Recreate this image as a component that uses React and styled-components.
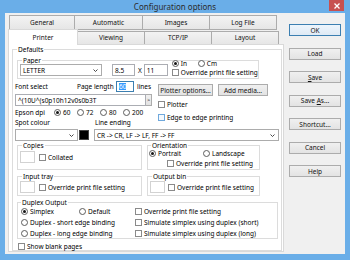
import React from 'react';
import styled, { createGlobalStyle } from 'styled-components';

const GlobalStyle = createGlobalStyle`
  html, body {
    margin: 0;
    padding: 0;
  }
  body {
    font-family: "Noto Sans", "Open Sans", sans-serif;
    font-size: 6.5px;
    color: #000;
  }
  * {
    box-sizing: border-box;
  }
`;

const Window = styled.div`
  width: 350px;
  height: 260px;
  background: #6aaee8;
  display: flex;
  flex-direction: column;
  overflow: hidden;
`;

const TitleBar = styled.div`
  height: 15px;
  display: grid;
  grid-template-columns: 1fr auto 1fr;
  align-items: center;
`;

const Title = styled.div`
  grid-column: 2;
  font-size: 8px;
  line-height: 10px;
  color: #2c2c2c;
`;

const CloseButton = styled.div`
  grid-column: 3;
  justify-self: end;
  align-self: start;
  width: 15px;
  height: 11px;
  margin-right: 6px;
  background: #c75050;
  display: flex;
  align-items: center;
  justify-content: center;
`;

const Client = styled.div`
  flex: 1;
  margin: 0 5px 6px 5px;
  background: #f0f0f0;
  display: flex;
  gap: 5px;
  padding: 2px 4px 2px 3px;
`;

const TabArea = styled.div`
  width: 276px;
  display: flex;
  flex-direction: column;
`;

const TabRow = styled.div`
  display: flex;
  align-items: flex-end;
  height: ${p => (p.$front ? 16 : 15)}px;
  padding-left: ${p => (p.$front ? 0 : 1)}px;
  margin-top: ${p => (p.$front ? -1 : 0)}px;
  margin-bottom: ${p => (p.$front ? -1 : 0)}px;
`;

const Tab = styled.div`
  width: ${p => p.$w}px;
  height: ${p => (p.$active ? 16 : p.$back ? 15 : 13)}px;
  margin-bottom: ${p => (p.$active || p.$back ? 0 : 1)}px;
  margin-left: -1px;
  &:first-child {
    margin-left: 0;
  }
  border: 1px solid ${p => (p.$active ? '#d9d9d9' : '#acacac')};
  border-bottom: ${p => (p.$back ? '1px solid #acacac' : 'none')};
  background: ${p => (p.$active ? '#fff' : 'linear-gradient(#f3f3f3, #e6e6e6)')};
  position: ${p => (p.$active ? 'relative' : 'static')};
  z-index: ${p => (p.$active ? 1 : 'auto')};
  display: flex;
  align-items: center;
  justify-content: center;
  padding-top: ${p => (p.$active ? 1 : 0)}px;
  line-height: 8px;
  color: #111;
`;

const Panel = styled.div`
  flex: 1;
  background: #fff;
  border: 1px solid #d9d9d9;
  padding: 1px 1px 0 3px;
  display: flex;
  flex-direction: column;
`;

const Group = styled.fieldset`
  margin: ${p => p.$m || '0'};
  padding: ${p => p.$pad || '0 2px 2px 2px'};
  border: 1px solid #dcdcdc;
  min-width: 0;
  width: ${p => (p.$w ? `${p.$w}px` : 'auto')};
  flex: ${p => (p.$grow ? 1 : 'none')};
  display: flex;
  flex-direction: ${p => (p.$col ? 'column' : 'row')};
  align-items: ${p => (p.$col ? 'stretch' : 'flex-start')};
`;

const Legend = styled.legend`
  padding: 0 1px;
  margin-left: 2px;
  line-height: 7px;
  color: #000;
`;

const Row = styled.div`
  display: flex;
  align-items: ${p => p.$align || 'center'};
  margin: ${p => p.$m || '0'};
  gap: ${p => p.$gap || 0}px;
`;

const Column = styled.div`
  display: flex;
  flex-direction: column;
  width: ${p => (p.$w ? `${p.$w}px` : 'auto')};
  margin: ${p => p.$m || '0'};
`;

const Text = styled.span`
  display: inline-block;
  width: ${p => (p.$w ? `${p.$w}px` : 'auto')};
  margin: ${p => p.$m || '0'};
  line-height: 7px;
  white-space: nowrap;
`;

const SelectBox = styled.div`
  width: ${p => p.$w}px;
  height: 12px;
  border: 1px solid #acacac;
  background: #fff;
  display: flex;
  align-items: center;
  justify-content: space-between;
  padding: 0 3px 0 2px;
  white-space: nowrap;
  flex: none;
`;

const TextInput = styled.div`
  width: ${p => p.$w}px;
  height: ${p => p.$h || 12}px;
  border: 1px solid ${p => (p.$focus ? '#3c7fb1' : '#abadb3')};
  background: #fff;
  display: flex;
  align-items: center;
  padding-left: 2px;
  margin: ${p => p.$m || '0'};
  white-space: nowrap;
  overflow: hidden;
  flex: none;
`;

const Selected = styled.span`
  background: #3399ff;
  color: #fff;
  line-height: 7px;
`;

const SmallButton = styled.div`
  width: 6px;
  height: 12px;
  border: 1px solid #acacac;
  border-left: none;
  background: linear-gradient(#f0f0f0, #e3e3e3);
  display: flex;
  align-items: center;
  justify-content: center;
  font-size: 5.5px;
  flex: none;
`;

const Button = styled.div`
  width: ${p => p.$w || 52}px;
  height: 12px;
  border: 1px solid ${p => (p.$default ? '#3c7fb1' : '#acacac')};
  background: ${p => (p.$default ? 'linear-gradient(#eef5fc, #dfeaf5)' : 'linear-gradient(#f0f0f0, #e3e3e3)')};
  display: flex;
  align-items: center;
  justify-content: center;
  white-space: nowrap;
  color: #111;
  flex: none;
  u {
    text-decoration: underline;
    text-underline-offset: 1px;
  }
`;

const ButtonColumn = styled.div`
  display: flex;
  flex-direction: column;
  gap: 11.5px;
  padding-top: 9px;
`;

const Option = styled.label`
  display: inline-flex;
  align-items: center;
  gap: 2px;
  height: 7px;
  line-height: 7px;
  white-space: nowrap;
  width: ${p => (p.$w ? `${p.$w}px` : 'auto')};
  margin: ${p => p.$m || '0'};
  flex: none;
`;

const Check = styled.span`
  width: 7px;
  height: 7px;
  border: 1px solid ${p => (p.$focus ? '#6fa8dc' : '#8a8a8a')};
  background: ${p => (p.$focus ? '#f4f9fe' : '#fff')};
  flex: none;
`;

const RadioDot = styled.span`
  width: 7px;
  height: 7px;
  border-radius: 50%;
  border: 1px solid #5c5c5c;
  background: #fff;
  display: flex;
  align-items: center;
  justify-content: center;
  flex: none;
  &::after {
    content: '';
    width: 3px;
    height: 3px;
    border-radius: 50%;
    background: ${p => (p.$on ? '#151515' : 'transparent')};
  }
`;

const SpinBox = styled.div`
  width: 15px;
  height: 12px;
  border: 1px solid #d2d2d2;
  background: #fff;
  flex: none;
`;

const Swatch = styled.div`
  width: 10px;
  height: 10px;
  margin-left: 1px;
  background: #000;
  border: 1px solid #444;
  flex: none;
`;

const DuplexGrid = styled.div`
  display: grid;
  grid-template-columns: 58px 56px auto;
  row-gap: 4px;
  margin: 2px 0 0 2px;
  align-items: center;
`;

const WideCell = styled.div`
  grid-column: 1 / 3;
  display: flex;
`;

const Chevron = () => (
  <svg width="5" height="3" viewBox="0 0 5 3">
    <path d="M0.5 0.5 L2.5 2.5 L4.5 0.5" fill="none" stroke="#333" strokeWidth="0.9" />
  </svg>
);

const Select = ({ w, children }) => (
  <SelectBox $w={w}>
    <Text>{children}</Text>
    <Chevron />
  </SelectBox>
);

const CheckOption = ({ children, focus, w, m }) => (
  <Option $w={w} $m={m}>
    <Check $focus={focus} />
    {children}
  </Option>
);

const RadioOption = ({ children, on, w, m }) => (
  <Option $w={w} $m={m}>
    <RadioDot $on={on} />
    {children}
  </Option>
);

const backTabs = [
  ['General', 66],
  ['Automatic', 69],
  ['Images', 68],
  ['Log File', 68],
];

const frontTabs = [
  ['Printer', 70],
  ['Viewing', 68],
  ['TCP/IP', 68],
  ['Layout', 68],
];

export default function App() {
  return (
    <>
      <GlobalStyle />
      <Window>
        <TitleBar>
          <Title>Configuration options</Title>
          <CloseButton>
            <svg width="6" height="6" viewBox="0 0 6 6">
              <path d="M0.5 0.5 L5.5 5.5 M5.5 0.5 L0.5 5.5" stroke="#fff" strokeWidth="1.3" />
            </svg>
          </CloseButton>
        </TitleBar>
        <Client>
          <TabArea>
            <TabRow>
              {backTabs.map(([label, w]) => (
                <Tab key={label} $w={w} $back>
                  {label}
                </Tab>
              ))}
            </TabRow>
            <TabRow $front>
              {frontTabs.map(([label, w], i) => (
                <Tab key={label} $w={w} $active={i === 0}>
                  {label}
                </Tab>
              ))}
            </TabRow>
            <Panel>
              <Group $col $grow $pad="0 2px 0 2px">
                <Legend>Defaults</Legend>

                <Group $w={242} $m="4px 0 0 2px">
                  <Legend>Paper</Legend>
                  <Row>
                    <Select w={82}>LETTER</Select>
                    <TextInput $w={23} $m="0 0 0 10px">8.5</TextInput>
                    <Text $m="0 2px 0 3px">X</Text>
                    <TextInput $w={24}>11</TextInput>
                    <Column $m="-4px 0 0 4px">
                      <Row>
                        <RadioOption on w={26}>In</RadioOption>
                        <RadioOption>Cm</RadioOption>
                      </Row>
                      <CheckOption m="2px 0 0 0">Override print file setting</CheckOption>
                    </Column>
                  </Row>
                </Group>

                <Row $align="flex-start">
                  <Column $w={138} $m="2px 0 0 0">
                    <Row>
                      <Text $w={62}>Font select</Text>
                      <Text $w={39}>Page length</Text>
                      <TextInput $w={18} $h={11} $focus>
                        <Selected>60</Selected>
                      </TextInput>
                      <Text $m="0 0 0 3px">lines</Text>
                    </Row>
                    <Row $m="2px 0 0 0">
                      <TextInput $w={131}>^(10U^(s0p10h12v0s0b3T</TextInput>
                      <SmallButton>&gt;</SmallButton>
                    </Row>
                    <Row $m="3px 0 0 0">
                      <Text $w={39}>Epson dpi</Text>
                      <RadioOption on w={23}>60</RadioOption>
                      <RadioOption w={23}>72</RadioOption>
                      <RadioOption w={23}>80</RadioOption>
                      <RadioOption>200</RadioOption>
                    </Row>
                    <Row $m="3px 0 0 0">
                      <Text $w={80}>Spot colour</Text>
                      <Text>Line ending</Text>
                    </Row>
                  </Column>
                  <Column $m="5px 0 0 5px">
                    <Row $gap={5}>
                      <Button $w={55}>Plotter options...</Button>
                      <Button $w={50}>Add media...</Button>
                    </Row>
                    <CheckOption m="5px 0 0 0">Plotter</CheckOption>
                    <CheckOption focus m="6px 0 0 0">Edge to edge printing</CheckOption>
                  </Column>
                </Row>

                <Row $m="3px 0 0 0">
                  <Select w={63}>&nbsp;</Select>
                  <Swatch />
                  <Row $m="0 0 0 5px">
                    <Select w={185}>CR -&gt; CR, LF -&gt; LF, FF -&gt; FF</Select>
                  </Row>
                </Row>

                <Row $align="stretch" $m="1px 0 0 2px" $gap={5}>
                  <Group $w={125} $pad="0 2px 4px 2px">
                    <Legend>Copies</Legend>
                    <Row $m="2px 0 0 0">
                      <SpinBox />
                      <CheckOption m="0 0 0 4px">Collated</CheckOption>
                    </Row>
                  </Group>
                  <Group $w={113} $col $pad="0 1px 2px 1px">
                    <Legend>Orientation</Legend>
                    <Row $m="1px 0 0 0">
                      <RadioOption on w={54}>Portrait</RadioOption>
                      <RadioOption>Landscape</RadioOption>
                    </Row>
                    <CheckOption m="3px 0 0 18px">Override print file setting</CheckOption>
                  </Group>
                </Row>

                <Row $align="stretch" $m="3px 0 0 2px" $gap={5}>
                  <Group $w={125} $pad="0 2px 2px 2px">
                    <Legend>Input tray</Legend>
                    <Row $m="1px 0 0 0">
                      <SpinBox />
                      <CheckOption m="0 0 0 4px">Override print file setting</CheckOption>
                    </Row>
                  </Group>
                  <Group $w={113} $pad="0 2px 2px 2px">
                    <Legend>Output bin</Legend>
                    <Row $m="1px 0 0 0">
                      <SpinBox />
                      <CheckOption m="0 0 0 3px">Override print file setting</CheckOption>
                    </Row>
                  </Group>
                </Row>

                <Group $w={261} $col $m="3px 0 0 2px" $pad="0 2px 1px 1px">
                  <Legend>Duplex Output</Legend>
                  <DuplexGrid>
                    <RadioOption on>Simplex</RadioOption>
                    <RadioOption>Default</RadioOption>
                    <CheckOption>Override print file setting</CheckOption>
                    <WideCell>
                      <RadioOption>Duplex - short edge binding</RadioOption>
                    </WideCell>
                    <CheckOption>Simulate simplex using duplex (short)</CheckOption>
                    <WideCell>
                      <RadioOption>Duplex - long edge binding</RadioOption>
                    </WideCell>
                    <CheckOption>Simulate simplex using duplex (long)</CheckOption>
                  </DuplexGrid>
                </Group>

                <CheckOption m="4px 0 0 3px">Show blank pages</CheckOption>
              </Group>
            </Panel>
          </TabArea>
          <ButtonColumn>
            <Button $default>OK</Button>
            <Button>Load</Button>
            <Button>
              <u>S</u>ave
            </Button>
            <Button>
              Save&nbsp;<u>A</u>s...
            </Button>
            <Button>Shortcut...</Button>
            <Button>Cancel</Button>
            <Button>Help</Button>
          </ButtonColumn>
        </Client>
      </Window>
    </>
  );
}
